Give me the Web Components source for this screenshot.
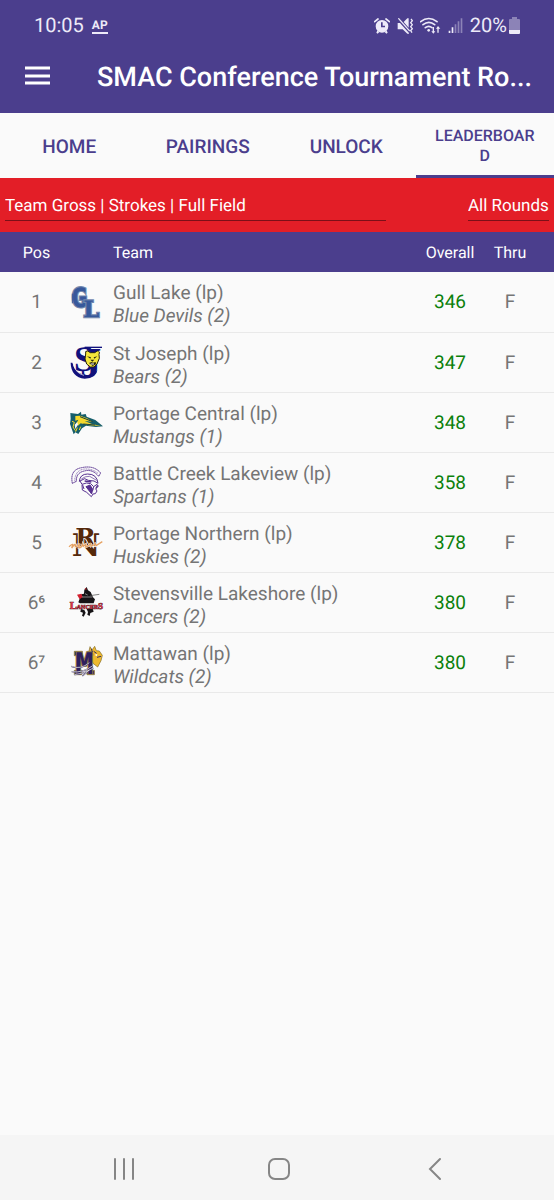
<!DOCTYPE html>
<html lang="en">
<head>
<meta charset="utf-8">
<meta name="viewport" content="width=device-width, initial-scale=1">
<title>SMAC Conference Tournament</title>
<style>
  :root {
    --purple: #4b3e8d;
    --red: #e31e27;
    --paper: #fafafa;
    --muted: #757575;
  }
  body {
    margin: 0;
    background: var(--paper);
    font-family: Roboto, "Liberation Sans", sans-serif;
    text-rendering: geometricPrecision;
  }
</style>
</head>
<body>

<app-screen>
  <status-bar slot="top" time="10:05" battery="20%"></status-bar>
  <app-bar slot="top">SMAC Conference Tournament Ro...</app-bar>
  <tab-bar slot="top">
    <app-tab href="#home">HOME</app-tab>
    <app-tab href="#pairings">PAIRINGS</app-tab>
    <app-tab href="#unlock">UNLOCK</app-tab>
    <app-tab href="#leaderboard" active>LEADERBOARD</app-tab>
  </tab-bar>
  <filter-bar slot="top"></filter-bar>
  <leader-board></leader-board>
  <system-nav slot="bottom"></system-nav>
</app-screen>

<script>
class AppScreen extends HTMLElement {
  connectedCallback() {
    this.attachShadow({ mode: 'open' });
    this.shadowRoot.innerHTML = `
      <style>
        :host {
          display: flex;
          flex-direction: column;
          min-height: 100vh;
        }
        main { flex: 1; }
      </style>
      <slot name="top"></slot>
      <main><slot></slot></main>
      <slot name="bottom"></slot>
    `;
  }
}

class StatusBar extends HTMLElement {
  connectedCallback() {
    this.attachShadow({ mode: 'open' });
    this.shadowRoot.innerHTML = `
      <style>
        :host {
          display: flex;
          justify-content: space-between;
          align-items: center;
          height: 32px;
          padding: 9px 34px 0;
          background: var(--purple);
          color: #edeaf8;
          font-size: 20px;
          line-height: 32px;
        }
        div { display: flex; align-items: center; }
        .left { gap: 8px; }
        .right { gap: 7px; }
        .ap {
          padding-top: 2px;
          font-size: 12px;
          line-height: 14px;
          font-weight: 700;
          border-bottom: 2px solid #edeaf8;
        }
        .level { display: flex; align-items: center; gap: 2px; }
        svg { display: block; fill: #edeaf8; }
      </style>
      <div class="left">
        <span>${this.getAttribute('time')}</span>
        <span class="ap">AP</span>
      </div>
      <div class="right">
        <svg width="16" height="17" viewBox="294 48 48 51">
          <path fill-rule="evenodd" d="M318 57a19 19 0 1 1 0 38a19 19 0 1 1 0-38zM315 64v15h12v-5h-7v-10z"/>
          <path d="M304 88l6 5-5 5-4-3zM332 88l-6 5 5 5 4-3z"/>
          <path d="M296 62l10-8M340 62l-10-8" stroke="#edeaf8" stroke-width="5" stroke-linecap="round"/>
        </svg>
        <svg width="16" height="17" viewBox="364 48 48 51">
          <path d="M366 66h7l27 30v2h-5l-14-13h-15zM384 63l11-11h4v28z"/>
          <path d="M369 53l32 36" stroke="#edeaf8" stroke-width="4" stroke-linecap="round"/>
          <path d="M406 54l4 5-5 6 5 6-5 6 5 6-5 6 4 6" fill="none" stroke="#edeaf8" stroke-width="4"/>
        </svg>
        <svg width="21" height="17" viewBox="432 48 63 51">
          <g fill="none" stroke="#edeaf8" stroke-width="5" stroke-linecap="round">
            <path d="M434 62q24-19 49 0M441 71q18-14 35 0M448 80q10-8 20 0"/>
          </g>
          <circle cx="458" cy="88" r="4"/>
          <path d="M470 78h4v13h4l-6 7-6-7h4zM484 95h4v-12h5l-7-8-6 8h4z"/>
        </svg>
        <svg width="15" height="17" viewBox="508 48 45 51">
          <path d="M510 89h5v7h-5zM519 79h5v17h-5z"/>
          <path d="M528 70h5v26h-5zM537 61h5v35h-5zM546 52h5v44h-5z" opacity=".4"/>
        </svg>
        <span class="level">
          <span>${this.getAttribute('battery')}</span>
          <svg width="11" height="17" viewBox="0 0 11 17">
            <path d="M3 0h5v2h2q1 0 1 1v10H0V3q0-1 1-1h2z" opacity=".4"/>
            <path d="M0 13h11v3q0 1-1 1H1q-1 0-1-1z"/>
          </svg>
        </span>
      </div>
    `;
  }
}

class AppBar extends HTMLElement {
  connectedCallback() {
    this.attachShadow({ mode: 'open' });
    this.shadowRoot.innerHTML = `
      <style>
        :host {
          display: flex;
          align-items: center;
          gap: 46px;
          height: 72px;
          padding: 0 16px 0 24px;
          background: var(--purple);
          color: #fff;
        }
        button {
          flex: none;
          padding: 0;
          border: 0;
          background: none;
          cursor: pointer;
        }
        svg { display: block; }
        h1 {
          margin: 0;
          font-size: 27px;
          line-height: 32px;
          font-weight: 500;
          white-space: nowrap;
          min-width: 0;
        }
      </style>
      <button aria-label="Open menu">
        <svg width="27" height="24" viewBox="0 0 27 24">
          <path d="M1 3h25M1 11h25M1 18h25" stroke="#fff" stroke-width="3"/>
        </svg>
      </button>
      <h1><slot></slot></h1>
    `;
  }
}

class TabBar extends HTMLElement {
  connectedCallback() {
    this.attachShadow({ mode: 'open' });
    this.shadowRoot.innerHTML = `
      <style>
        :host { display: block; }
        nav {
          display: grid;
          grid-template-columns: repeat(4, 1fr);
          height: 65px;
        }
      </style>
      <nav><slot></slot></nav>
    `;
  }
}

class AppTab extends HTMLElement {
  connectedCallback() {
    this.attachShadow({ mode: 'open' });
    this.shadowRoot.innerHTML = `
      <style>
        :host { display: block; min-width: 0; }
        a {
          display: flex;
          align-items: center;
          justify-content: center;
          box-sizing: border-box;
          height: 100%;
          padding: 3px 16px 0;
          color: var(--purple);
          font-size: 19px;
          line-height: 20px;
          font-weight: 500;
          text-align: center;
          text-decoration: none;
        }
        :host([active]) a {
          padding-top: 4px;
          border-bottom: 3px solid var(--purple);
          font-size: 16px;
          word-break: break-all;
        }
      </style>
      <a href="${this.getAttribute('href')}"><span><slot></slot></span></a>
    `;
  }
}

class FilterBar extends HTMLElement {
  connectedCallback() {
    this.attachShadow({ mode: 'open' });
    this.shadowRoot.innerHTML = `
      <style>
        :host {
          display: flex;
          justify-content: space-between;
          align-items: center;
          height: 54px;
          padding: 0 5px;
          background: var(--red);
        }
        select {
          appearance: none;
          box-sizing: border-box;
          height: 32px;
          margin: 0;
          padding: 2px 0 0;
          border: 0;
          border-bottom: 1px solid #7d0f18;
          border-radius: 0;
          background: none;
          color: #fff;
          font: 17px/30px Roboto, "Liberation Sans", sans-serif;
          text-rendering: geometricPrecision;
        }
        .board { width: 70%; }
      </style>
      <select class="board" aria-label="Leaderboard">
        <option>Team Gross | Strokes | Full Field</option>
      </select>
      <select aria-label="Round">
        <option>All Rounds</option>
      </select>
    `;
  }
}

const LOGOS = {
  gull: `<svg viewBox="24 12 108 108">
    <text font-weight="700" fill="#38589b" stroke="#7287ad" stroke-width="7" paint-order="stroke"><tspan x="34" y="82" font-family="DejaVu Sans Mono" font-size="80">G</tspan><tspan x="70" y="111" font-family="DejaVu Serif" font-size="68">L</tspan></text>
    <path d="M44 31h32M37 41v29M79 109h38M88 69v34" stroke="#38589b" stroke-width="3"/>
  </svg>`,
  joseph: `<svg viewBox="24 192 108 108">
    <text font-family="Liberation Serif" font-weight="700" fill="#11117c"><tspan x="42" y="272" font-size="108">S</tspan><tspan x="60" y="290" font-size="128">J</tspan></text>
    <path d="M32 248q1 43 42 48 36-2 38-27-12 20-32 16-34-2-43-37z" fill="#11117c"/>
    <path d="M40 255q9 26 32 31" fill="none" stroke="#fafafa" stroke-width="2"/>
    <path d="M74 202h52" stroke="#11117c" stroke-width="4"/>
    <path d="M77 222q-3-10 6-9l8 5h13l8-5q9 0 5 10l1 12-7 17-9 9H91l-11-9-5-15z" fill="#f4e63c" stroke="#26240f" stroke-width="3"/>
    <path d="M81 229l12 3-2 4zM112 229l-11 3 2 4zM91 239h12l-6 6zM87 249l8-3 4 2 8-2 1 7-10 5z" fill="#26240f"/>
    <path d="M92 252h10" stroke="#fff" stroke-width="3"/>
  </svg>`,
  central: `<svg viewBox="24 12 108 108">
    <path d="M31 39l23 3 9-7 1 9 13-2 3 8 26 10 23 19-21 2-30-4-12 8-11 17-9-5-5 6-6-17-5-14 2-16z" fill="#165e6b"/>
    <path d="M46 48l15-1 20 8 17 10-24-2 22 9 27 6-36-2-25-6-8 7-5-7 6-11-9 3z" fill="#f5d82b"/>
    <path d="M36 64l7 3-4 14 7 11M52 83l-5 12M62 80l-4 10" fill="none" stroke="#f5d82b" stroke-width="3"/>
    <path d="M44 74l8-8 2 8-8 13z" fill="#fafafa"/>
    <path d="M60 50l38 15M70 72l35 3" stroke="#173d3d" stroke-width="3"/>
  </svg>`,
  lakeview: `<svg viewBox="24 192 108 108">
    <g fill="none" stroke="#57308f" stroke-width="3" stroke-linejoin="round">
      <path d="M37 250q-8-41 28-47 37-8 57 16l-6 10q-19-23-43-16-25 5-24 31z" stroke-dasharray="5 1"/>
      <path d="M44 242q2-33 31-35 22-1 39 13" stroke-width="2" stroke-dasharray="3 2"/>
      <path d="M58 244q2-22 25-22 28 0 31 28l-12-7-17-2-11-5z"/>
      <path d="M64 237q11-9 25-8l21 12" stroke-width="2"/>
      <path d="M60 243l6 10q14-7 26-2l9 9 10-7 4 6-8 7 4 7-5 8-7 1-5 8-14-13-13-7-1-16"/>
      <path d="M78 260l17 22 3-14-8-13zM101 260l-3 12M68 255l4 12" fill="#57308f"/>
      <path d="M74 243l20 3M108 265l5-9" stroke-width="4"/>
    </g>
  </svg>`,
  northern: `<svg viewBox="24 27 108 108">
    <text font-family="DejaVu Serif" font-weight="700" fill="#55290b" paint-order="stroke"><tspan x="35" y="124" font-size="94">N</tspan><tspan x="46" y="94" font-size="74" stroke="#fff" stroke-width="5">R</tspan></text>
    <path d="M27 95q15-13 10-2l-2 6q13-19 11-4 12-3 13-9l-3 12q8 2 12-11l2 7 8-6-1 8q12-3 15-12l1 10q13-5 12-11l3 9 19-12" fill="none" stroke="#fff" stroke-width="6"/>
    <path d="M27 95q15-13 10-2l-2 6q13-19 11-4 12-3 13-9l-3 12q8 2 12-11l2 7 8-6-1 8q12-3 15-12l1 10q13-5 12-11l3 9 19-12" fill="none" stroke="#e5a263" stroke-width="4"/>
  </svg>`,
  lancers: `<svg viewBox="24 27 108 108">
    <path d="M55 82l9-24 8-2 1-12 7-8 4 10 8 5 7 16 6 6-4 12H60z" fill="#161416"/>
    <path d="M90 62l28-4" stroke="#444" stroke-width="2"/>
    <path d="M51 59l13-3 4 10-9 7zM74 39l6 2-2 5z" fill="#d21f2e"/>
    <path d="M66 66h31M75 56l8 4" stroke="#c2bfc1" stroke-width="2"/>
    <path d="M63 102l10 3 4 8-6 12-5-3 3-9-8-3zM80 102l18-1 3 9-10 4-2 9-7-4 2-8z" fill="#161416"/>
    <text x="29" y="101" font-family="Liberation Serif" font-weight="700" font-size="32" fill="#d33645" stroke="#3f1419" stroke-width="2" paint-order="stroke">L<tspan font-size="18">ANCER</tspan><tspan font-size="27">S</tspan></text>
  </svg>`,
  mattawan: `<svg viewBox="24 207 108 108">
    <path d="M86 233l4-18 6 10 8-11 5 13 9 1 9 13-4 16-10 19-14-11z" fill="#edb92f" stroke="#816a29" stroke-width="2"/>
    <path d="M43 229h24v13H43zM82 229h22v13H82zM43 286h22v13H43zM81 286h22v13H81z" fill="#2d205e" stroke="#968349" stroke-width="3"/>
    <text x="46" y="297" font-family="DejaVu Sans Mono" font-size="90" font-weight="700" fill="#2d205e" stroke="#968349" stroke-width="5" paint-order="stroke">M</text>
    <path d="M98 222l12 5-6 11 11-6 7 10-11 1-9 21" fill="#edb92f"/>
    <path d="M101 229l9 6M111 247l12-3M94 221l3 10" stroke="#3c315f" stroke-width="3"/>
    <path d="M104 239l8-2-2 7z" fill="#fff"/>
    <path d="M34 274q28 11 54-11M35 290q34 5 63-18M43 299q28-1 57-20M67 303l21-18" fill="none" stroke="#3c315f" stroke-width="4"/>
    <path d="M34 274q28 11 54-11M35 290q34 5 63-18M43 299q28-1 57-20M67 303l21-18" fill="none" stroke="#fff" stroke-width="2"/>
  </svg>`
};

class TeamLogo extends HTMLElement {
  connectedCallback() {
    this.attachShadow({ mode: 'open' });
    this.shadowRoot.innerHTML = `
      <style>
        :host { display: block; width: 36px; height: 36px; }
        svg { display: block; width: 100%; height: 100%; overflow: visible; }
      </style>
      ${LOGOS[this.getAttribute('team')]}
    `;
  }
}

const teams = [
  { pos: '1', logo: 'gull', school: 'Gull Lake (lp)', name: 'Blue Devils (2)', overall: 346, thru: 'F' },
  { pos: '2', logo: 'joseph', school: 'St Joseph (lp)', name: 'Bears (2)', overall: 347, thru: 'F' },
  { pos: '3', logo: 'central', school: 'Portage Central (lp)', name: 'Mustangs (1)', overall: 348, thru: 'F' },
  { pos: '4', logo: 'lakeview', school: 'Battle Creek Lakeview (lp)', name: 'Spartans (1)', overall: 358, thru: 'F' },
  { pos: '5', logo: 'northern', school: 'Portage Northern (lp)', name: 'Huskies (2)', overall: 378, thru: 'F' },
  { pos: '6⁶', logo: 'lancers', school: 'Stevensville Lakeshore (lp)', name: 'Lancers (2)', overall: 380, thru: 'F' },
  { pos: '6⁷', logo: 'mattawan', school: 'Mattawan (lp)', name: 'Wildcats (2)', overall: 380, thru: 'F' }
];

class LeaderBoard extends HTMLElement {
  connectedCallback() {
    this.attachShadow({ mode: 'open' });
    this.shadowRoot.innerHTML = `
      <style>
        :host { display: block; color: var(--muted); }
        table {
          width: 100%;
          table-layout: fixed;
          border-collapse: collapse;
          font-size: 19px;
          line-height: 23px;
        }
        th, td { padding: 0; text-align: center; }
        th {
          height: 40px;
          background: var(--purple);
          color: #fff;
          font-size: 16px;
          font-weight: 400;
        }
        td {
          box-sizing: border-box;
          height: 60px;
          border-bottom: 1px solid #e9e9e9;
        }
        .pos { width: 73px; }
        .logo { width: 40px; }
        .overall { width: 60px; }
        .thru { width: 60px; padding-right: 14px; }
        .team { text-align: left; }
        td.team { padding-top: 5px; }
        team-logo { margin-left: -5px; }
        td.overall { color: #0b800b; }
        em { display: block; }
      </style>
      <table>
        <thead>
          <tr>
            <th class="pos">Pos</th>
            <th class="logo"></th>
            <th class="team">Team</th>
            <th class="overall">Overall</th>
            <th class="thru">Thru</th>
          </tr>
        </thead>
        <tbody>
          ${teams.map(t => `
            <tr>
              <td class="pos">${t.pos}</td>
              <td class="logo"><team-logo team="${t.logo}"></team-logo></td>
              <td class="team">${t.school}<em>${t.name}</em></td>
              <td class="overall">${t.overall}</td>
              <td class="thru">${t.thru}</td>
            </tr>`).join('')}
        </tbody>
      </table>
    `;
  }
}

class SystemNav extends HTMLElement {
  connectedCallback() {
    this.attachShadow({ mode: 'open' });
    this.shadowRoot.innerHTML = `
      <style>
        :host {
          display: grid;
          grid-template-columns: repeat(3, 1fr);
          height: 65px;
          padding: 0 41px 0 46px;
          background: #f5f5f5;
        }
        button {
          display: flex;
          align-items: center;
          justify-content: center;
          padding: 3px 0 0;
          border: 0;
          background: none;
        }
        svg {
          fill: none;
          stroke: #868686;
          stroke-width: 2;
          stroke-linecap: round;
        }
      </style>
      <button aria-label="Recent apps">
        <svg width="24" height="24" viewBox="0 0 24 24"><path d="M3 2v20M12 2v20M21 2v20"/></svg>
      </button>
      <button aria-label="Home">
        <svg width="24" height="24" viewBox="0 0 24 24"><rect x="2" y="2" width="20" height="20" rx="6"/></svg>
      </button>
      <button aria-label="Back">
        <svg width="24" height="24" viewBox="0 0 24 24"><path d="M17 2L7 12l10 10"/></svg>
      </button>
    `;
  }
}

customElements.define('app-screen', AppScreen);
customElements.define('status-bar', StatusBar);
customElements.define('app-bar', AppBar);
customElements.define('tab-bar', TabBar);
customElements.define('app-tab', AppTab);
customElements.define('filter-bar', FilterBar);
customElements.define('team-logo', TeamLogo);
customElements.define('leader-board', LeaderBoard);
customElements.define('system-nav', SystemNav);
</script>
</body>
</html>
